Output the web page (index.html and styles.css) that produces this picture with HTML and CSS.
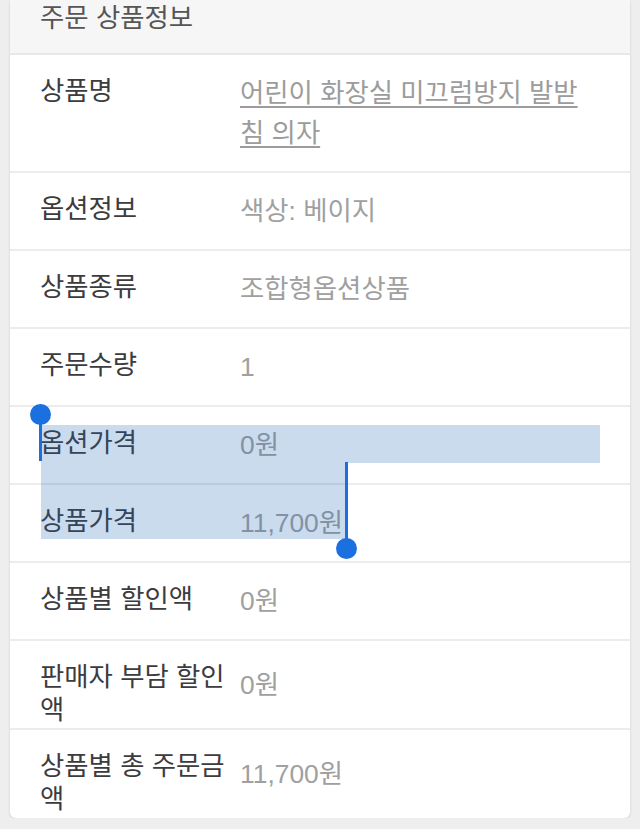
FILE: index.html
```html
<!DOCTYPE html>
<html lang="ko">
<head>
    <meta charset="UTF-8">
    <meta name="viewport" content="width=device-width, initial-scale=1.0">
    <title>주문 상품정보</title>
    <link rel="stylesheet" href="styles.css">
</head>
<body>
    <div class="card">
        <div class="card-title">주문 상품정보</div>

        <dl class="info">
            <div class="info-row">
                <dt>상품명</dt>
                <dd><a href="#" class="product-link">어린이 화장실 미끄럼방지 발받침 의자</a></dd>
            </div>
            <div class="info-row">
                <dt>옵션정보</dt>
                <dd>색상: 베이지</dd>
            </div>
            <div class="info-row">
                <dt>상품종류</dt>
                <dd>조합형옵션상품</dd>
            </div>
            <div class="info-row">
                <dt>주문수량</dt>
                <dd>1</dd>
            </div>
            <div class="info-row">
                <dt>옵션가격</dt>
                <dd>0원</dd>
            </div>
            <div class="info-row">
                <dt>상품가격</dt>
                <dd>11,700원</dd>
            </div>
            <div class="info-row">
                <dt>상품별 할인액</dt>
                <dd>0원</dd>
            </div>
            <div class="info-row">
                <dt>판매자 부담 할인액</dt>
                <dd>0원</dd>
            </div>
            <div class="info-row">
                <dt>상품별 총 주문금액</dt>
                <dd>11,700원</dd>
            </div>
        </dl>

        <!-- text selection drawn over the price rows -->
        <div class="selection sel-first"></div>
        <div class="selection sel-last"></div>
        <div class="handle handle-start"><span class="knob"></span></div>
        <div class="handle handle-end"><span class="knob"></span></div>
    </div>
</body>
</html>
```

FILE: styles.css
```css
body {
    margin: 0;
    background-color: #eeeeef;
    font-family: "Liberation Sans", "Noto Sans CJK KR", sans-serif;
    font-size: 26.4px;
}

.card {
    position: relative;
    margin: 0 10px;
    height: 818px;
    overflow: hidden;
    background-color: #fff;
    border-radius: 0 0 6px 6px;
    box-shadow: 0 1px 3px rgba(0, 0, 0, 0.12);
}

.card-title {
    padding: 2px 30px 19px;
    line-height: 32px;
    color: #555;
    background-color: #f6f6f6;
    border-bottom: 2px solid #e8e8e8;
}

.info {
    margin: 0;
}

.info-row {
    display: grid;
    grid-template-columns: 200px 1fr;
    padding: 0 30px;
    border-bottom: 2px solid #ececec;
}

.info-row:last-child {
    border-bottom: none;
}

.info-row dt {
    align-self: start;
    padding: 20px 4px 1px 0;
    line-height: 33px;
    color: #3c3c3e;
}

.info-row dd {
    align-self: center;
    margin: 0;
    padding: 18px 4px 18px 0;
    line-height: 40px;
    color: #a0a0a0;
}

.product-link {
    color: #9c9c9c;
    text-decoration: underline;
    text-underline-offset: 4px;
}

.selection {
    position: absolute;
    left: 31px;
    background-color: rgba(30, 100, 180, 0.23);
}

.sel-first {
    top: 425px;
    width: 559px;
    height: 38px;
}

.sel-last {
    top: 463px;
    width: 304px;
    height: 76px;
}

.handle {
    position: absolute;
    width: 3px;
    background-color: #1b6fdf;
}

.handle .knob {
    position: absolute;
    left: -9px;
    width: 21px;
    height: 21px;
    border-radius: 50%;
    background-color: #1b6fdf;
}

.handle-start {
    left: 29px;
    top: 414px;
    height: 47px;
}

.handle-start .knob {
    top: -10px;
}

.handle-end {
    left: 335px;
    top: 462px;
    height: 86px;
}

.handle-end .knob {
    bottom: -11px;
}
```
